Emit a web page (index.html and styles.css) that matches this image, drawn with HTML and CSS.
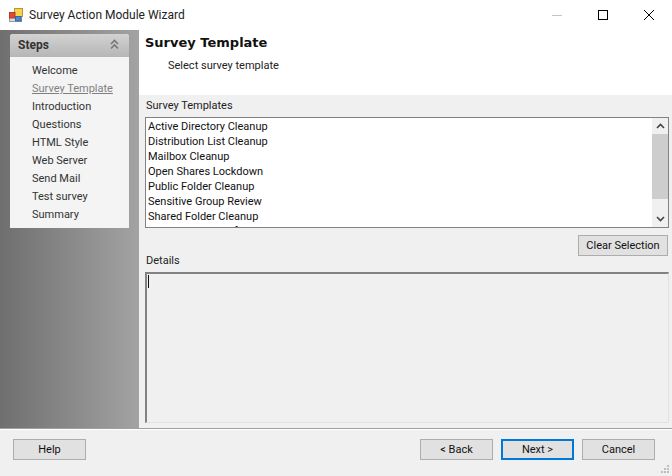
FILE: index.html
```html
<!DOCTYPE html>
<html lang="en">
<head>
<meta charset="utf-8">
<title>Survey Action Module Wizard</title>
<link rel="stylesheet" href="styles.css">
</head>
<body>
<div class="window">
  <header class="titlebar">
    <svg class="app-icon" width="14" height="14" viewBox="0 0 14 14">
      <rect x="0.5" y="9.5" width="12" height="4" fill="#d8d8e0" stroke="#9a9aa6"/>
      <rect x="5.5" y="0.5" width="8" height="8" fill="#f8d24a" stroke="#b8952f"/>
      <rect x="0.5" y="4.5" width="5.5" height="5.5" fill="#e2492f" stroke="#b43a2a"/>
      <rect x="6.5" y="8.5" width="5.5" height="4.5" fill="#4a86d8" stroke="#3a66a8"/>
    </svg>
    <span class="title">Survey Action Module Wizard</span>
    <div class="controls">
      <span class="ctl"><svg width="10" height="10" viewBox="0 0 10 10"><path d="M0 5.5H10" stroke="#c4c4c4"/></svg></span>
      <span class="ctl"><svg width="10" height="10" viewBox="0 0 10 10"><rect x="0.5" y="0.5" width="9" height="9" fill="none" stroke="#000"/></svg></span>
      <span class="ctl"><svg width="10" height="10" viewBox="0 0 10 10"><path d="M0 0L10 10M10 0L0 10" stroke="#000"/></svg></span>
    </div>
  </header>
  <div class="main">
    <aside class="sidebar">
      <div class="panel">
        <div class="panel-head">
          <span>Steps</span>
          <svg width="9" height="11" viewBox="0 0 9 11"><path d="M1 5L4.5 1.5L8 5M1 9.5L4.5 6L8 9.5" fill="none" stroke="#777" stroke-width="1.6"/></svg>
        </div>
        <ul class="steps">
          <li>Welcome</li>
          <li class="current">Survey Template</li>
          <li>Introduction</li>
          <li>Questions</li>
          <li>HTML Style</li>
          <li>Web Server</li>
          <li>Send Mail</li>
          <li>Test survey</li>
          <li>Summary</li>
        </ul>
      </div>
    </aside>
    <main class="content">
      <section class="banner">
        <h1>Survey Template</h1>
        <p>Select survey template</p>
      </section>
      <section class="body">
        <label class="label">Survey Templates</label>
        <div class="listbox">
          <ul class="items">
            <li>Active Directory Cleanup</li>
            <li>Distribution List Cleanup</li>
            <li>Mailbox Cleanup</li>
            <li>Open Shares Lockdown</li>
            <li>Public Folder Cleanup</li>
            <li>Sensitive Group Review</li>
            <li>Shared Folder Cleanup</li>
            <li>Security Review of Access</li>
          </ul>
          <div class="scrollbar">
            <svg class="arrow" width="9" height="6" viewBox="0 0 9 6"><path d="M1 5L4.5 1.5L8 5" fill="none" stroke="#444" stroke-width="1.6"/></svg>
            <div class="track"><div class="thumb"></div></div>
            <svg class="arrow" width="9" height="6" viewBox="0 0 9 6"><path d="M1 1L4.5 4.5L8 1" fill="none" stroke="#444" stroke-width="1.6"/></svg>
          </div>
        </div>
        <div class="clear-row"><button class="btn clear" type="button">Clear Selection</button></div>
        <label class="label details-label">Details</label>
        <div class="details"><span class="caret"></span></div>
      </section>
    </main>
  </div>
  <footer class="footer">
    <button class="btn" type="button">Help</button>
    <div class="nav">
      <button class="btn" type="button">&lt; Back</button>
      <button class="btn primary" type="button">Next &gt;</button>
      <button class="btn" type="button">Cancel</button>
    </div>
    <svg class="grip" width="10" height="10" viewBox="0 0 10 10" fill="#bdbdbd"><rect x="7" y="1" width="2" height="2"/><rect x="4" y="4" width="2" height="2"/><rect x="7" y="4" width="2" height="2"/><rect x="1" y="7" width="2" height="2"/><rect x="4" y="7" width="2" height="2"/><rect x="7" y="7" width="2" height="2"/></svg>
  </footer>
</div>
</body>
</html>
```
FILE: styles.css
```css
* { box-sizing: border-box; }
html, body { margin: 0; padding: 0; }
body {
  width: 672px;
  height: 476px;
  overflow: hidden;
  font-family: "Roboto", "Liberation Sans", sans-serif;
  font-size: 11px;
  color: #111;
  background: #f0f0f0;
}
.window { display: flex; flex-direction: column; width: 672px; height: 476px; }

.titlebar { display: flex; align-items: center; height: 30px; background: #fff; padding-left: 9px; flex: none; }
.app-icon { margin-right: 6px; }
.title { font-size: 12px; color: #222; flex: 1; }
.controls { display: flex; }
.ctl { display: flex; width: 46px; height: 30px; align-items: center; justify-content: center; }

.main { display: flex; height: 398px; flex: none; }
.sidebar { width: 139px; flex: none; padding: 4px 10px 0; background: linear-gradient(90deg, #6f6f6f, #a3a3a3); }
.panel { width: 119px; height: 194px; background: #f4f4f4; border-radius: 3px 3px 0 0; }
.panel-head {
  display: flex; justify-content: space-between; align-items: center;
  height: 23px; padding: 0 10px 2px 8px;
  background: linear-gradient(180deg, #d2d2d2, #b6b6b6);
  border-radius: 3px 3px 0 0;
  font-weight: 700; font-size: 12px; color: #333;
}
.steps { list-style: none; margin: 0; padding: 5px 0 0 22px; }
.steps li { height: 18px; line-height: 18px; color: #333; white-space: nowrap; }
.steps .current { color: #808080; text-decoration: underline; }

.content { flex: 1; display: flex; flex-direction: column; min-width: 0; }
.banner { height: 65px; background: #fff; padding: 4px 0 0 6px; flex: none; }
.banner h1 { margin: 0; font-family: "DejaVu Sans", sans-serif; font-size: 13px; font-weight: 700; line-height: 18px; color: #111; }
.banner p { margin: 6px 0 0 23px; line-height: 16px; color: #222; }

.body { flex: 1; display: flex; flex-direction: column; padding: 0 4px 5px 6px; background: #f0f0f0; }
.label { display: block; line-height: 16px; margin: 3px 0 3px 1px; color: #222; }
.listbox { display: flex; width: 524px; height: 111px; background: #fff; border: 1px solid #828282; flex: none; overflow: hidden; }
.items { flex: 1; list-style: none; margin: 0; padding: 1px 0 0 2px; overflow: hidden; }
.items li { height: 15px; line-height: 15px; white-space: nowrap; }
.scrollbar { width: 16px; display: flex; flex-direction: column; align-items: center; background: #f0f0f0; }
.arrow { flex: none; margin: 5px 0; }
.track { flex: 1; width: 100%; }
.thumb { height: 65px; background: #cdcdcd; }
.clear-row { display: flex; justify-content: flex-end; margin: 7px 0 0; }
.details-label { margin: -3px 0 3px 1px; }
.details { flex: 1; width: 524px; border: 2px solid #828282; border-right: 1px solid #e2e2e2; border-bottom: 1px solid #e2e2e2; padding: 1px 1px; background: #f0f0f0; }
.caret { display: block; width: 1px; height: 13px; background: #111; }

.btn {
  width: 73px; height: 21px; padding: 0;
  font: inherit; color: #111;
  background: #e1e1e1; border: 1px solid #adadad;
}
.btn.clear { width: 90px; }
.btn.primary { border: 2px solid #0078d7; }

.footer {
  position: relative;
  display: flex; justify-content: space-between; align-items: flex-start;
  flex: 1; padding: 10px 17px 0 13px;
  background: #f0f0f0;
  border-top: 1px solid #a0a0a0;
  box-shadow: inset 0 1px 0 #fff;
}
.nav { display: flex; gap: 8px; }
.grip { position: absolute; right: 2px; bottom: 2px; }
```
